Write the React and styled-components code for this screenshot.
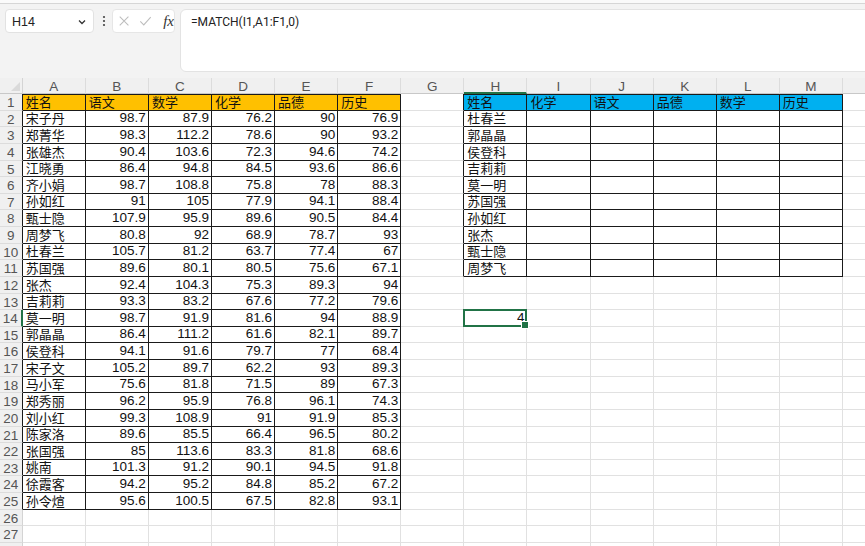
import React from 'react';
import styled, { createGlobalStyle, css } from 'styled-components';

const GlobalStyle = createGlobalStyle`
  html, body {
    margin: 0;
    padding: 0;
    background: #f3f3f3;
    overflow: hidden;
  }
  * { box-sizing: border-box; }
`;

const COL_W = 63.1;
const HEAD_W = 22.7;
const ROW_H = 16.64;
const LETTERS = 'ABCDEFGHIJKLMN'.split('');
const ROW_COUNT = 28;

const rows = [
  ['姓名', '语文', '数学', '化学', '品德', '历史'],
  ['宋子丹', 98.7, 87.9, 76.2, 90, 76.9],
  ['郑菁华', 98.3, 112.2, 78.6, 90, 93.2],
  ['张雄杰', 90.4, 103.6, 72.3, 94.6, 74.2],
  ['江晓勇', 86.4, 94.8, 84.5, 93.6, 86.6],
  ['齐小娟', 98.7, 108.8, 75.8, 78, 88.3],
  ['孙如红', 91, 105, 77.9, 94.1, 88.4],
  ['甄士隐', 107.9, 95.9, 89.6, 90.5, 84.4],
  ['周梦飞', 80.8, 92, 68.9, 78.7, 93],
  ['杜春兰', 105.7, 81.2, 63.7, 77.4, 67],
  ['苏国强', 89.6, 80.1, 80.5, 75.6, 67.1],
  ['张杰', 92.4, 104.3, 75.3, 89.3, 94],
  ['吉莉莉', 93.3, 83.2, 67.6, 77.2, 79.6],
  ['莫一明', 98.7, 91.9, 81.6, 94, 88.9],
  ['郭晶晶', 86.4, 111.2, 61.6, 82.1, 89.7],
  ['侯登科', 94.1, 91.6, 79.7, 77, 68.4],
  ['宋子文', 105.2, 89.7, 62.2, 93, 89.3],
  ['马小军', 75.6, 81.8, 71.5, 89, 67.3],
  ['郑秀丽', 96.2, 95.9, 76.8, 96.1, 74.3],
  ['刘小红', 99.3, 108.9, 91, 91.9, 85.3],
  ['陈家洛', 89.6, 85.5, 66.4, 96.5, 80.2],
  ['张国强', 85, 113.6, 83.3, 81.8, 68.6],
  ['姚南', 101.3, 91.2, 90.1, 94.5, 91.8],
  ['徐霞客', 94.2, 95.2, 84.8, 85.2, 67.2],
  ['孙令煊', 95.6, 100.5, 67.5, 82.8, 93.1],
];

const lookupHead = ['姓名', '化学', '语文', '品德', '数学', '历史'];
const lookupNames = ['杜春兰', '郭晶晶', '侯登科', '吉莉莉', '莫一明', '苏国强', '孙如红', '张杰', '甄士隐', '周梦飞'];

const SEL = { r: 14, c: 7 };

const inTable = (r, c) =>
  (r >= 1 && r <= 25 && c >= 0 && c <= 5) || (r >= 1 && r <= 11 && c >= 7 && c <= 12);

const cellValue = (r, c) => {
  if (c <= 5 && rows[r - 1]) return rows[r - 1][c];
  if (c >= 7 && c <= 12) {
    if (r === 1) return lookupHead[c - 7];
    if (c === 7 && r <= 11) return lookupNames[r - 2];
  }
  if (r === SEL.r && c === SEL.c) return 4;
  return '';
};

const fillOf = (r, c) => {
  if (r === 1 && c <= 5) return '#ffc000';
  if (r === 1 && c >= 7 && c <= 12) return '#00b0f0';
  return '#ffffff';
};

const Page = styled.div`
  width: 865px;
  height: 546px;
  overflow: hidden;
  display: flex;
  flex-direction: column;
`;

const RibbonEdge = styled.div`
  height: 4px;
  background: #fafafa;
  border-bottom: 1px solid #d6d6d6;
  flex-shrink: 0;
`;

const FormulaBar = styled.div`
  display: flex;
  align-items: flex-start;
  padding: 5px 0 0 5px;
  height: 74px;
  flex-shrink: 0;
`;

const NameBox = styled.div`
  width: 89px;
  height: 24px;
  background: #fff;
  border: 1px solid #e2e2e2;
  border-radius: 4px;
  display: flex;
  align-items: center;
  justify-content: space-between;
  padding: 1px 6px 0 6px;
  font-family: 'Liberation Sans', Arial, sans-serif;
  font-size: 12.5px;
  color: #222;
`;

const Dots = styled.div`
  width: 17px;
  height: 24px;
  display: flex;
  align-items: center;
  justify-content: center;
  margin-left: 1px;
`;

const FxBox = styled.div`
  width: 63px;
  height: 24px;
  background: #fff;
  border: 1px solid #e6e6e6;
  border-radius: 4px;
  display: flex;
  align-items: center;
  gap: 9px;
  padding-left: 5px;
`;

const FxLabel = styled.span`
  font-family: 'Liberation Serif', 'Times New Roman', serif;
  font-style: italic;
  font-size: 15px;
  color: #333;
  margin-left: 2px;
`;

const FormulaInput = styled.div`
  flex: 1;
  margin-left: 5px;
  margin-right: -10px;
  height: 63px;
  background: #fff;
  border: 1px solid #e3e3e3;
  border-radius: 6px;
  padding: 5px 0 0 10px;
  font-family: Roboto, 'Liberation Sans', sans-serif;
  font-size: 12px;
  color: #222;
`;

const Grid = styled.div`
  display: grid;
  grid-template-columns: ${HEAD_W}px repeat(${LETTERS.length}, ${COL_W}px);
  grid-template-rows: 16px repeat(${ROW_COUNT}, ${ROW_H}px);
  background: #fff;
`;

const headerBase = css`
  background: #f0f0f0;
  color: #555;
  font-family: 'Liberation Sans', Arial, sans-serif;
  font-size: 13.5px;
  display: flex;
  align-items: center;
  justify-content: center;
  line-height: 1;
`;

const Corner = styled.div`
  ${headerBase};
  position: relative;
  border-right: 1px solid #d4d4d4;
  border-bottom: 1px solid #c8c8c8;
  &::after {
    content: '';
    position: absolute;
    right: 2px;
    bottom: 2px;
    border-style: solid;
    border-width: 0 0 9px 9px;
    border-color: transparent transparent #dadada transparent;
  }
`;

const ColHead = styled.div`
  ${headerBase};
  padding-top: 3px;
  border-right: 1px solid #dcdcdc;
  border-bottom: ${p => (p.$active ? '2px solid #217346' : '1px solid #c8c8c8')};
`;

const RowHead = styled.div`
  ${headerBase};
  border-right: ${p => (p.$active ? '2px solid #217346' : p.$edge ? '1px solid #1a1a1a' : '1px solid #d4d4d4')};
  border-bottom: 1px solid #dcdcdc;
  padding-top: 2px;
`;

const Cell = styled.div`
  position: relative;
  background: ${p => p.$fill};
  border-right: 1px solid ${p => (p.$right ? '#1a1a1a' : '#e1e1e1')};
  border-bottom: 1px solid ${p => (p.$bottom ? '#1a1a1a' : '#e1e1e1')};
  box-shadow: ${p => (p.$top ? 'inset 0 1px 0 #1a1a1a' : 'none')};
  display: flex;
  align-items: flex-end;
  justify-content: ${p => (p.$num ? 'flex-end' : 'flex-start')};
  padding: 0 2px 0 3px;
  white-space: nowrap;
  font-family: ${p => (p.$num
    ? "'Liberation Sans', Arial, sans-serif"
    : "'Noto Sans CJK SC', 'Liberation Sans', sans-serif")};
  font-size: ${p => (p.$num ? '13.5px' : '13px')};
  line-height: 14px;
  color: #111;

  ${p => p.$selected && css`
    &::after {
      content: '';
      position: absolute;
      left: -1px;
      top: -1px;
      right: -1px;
      bottom: -1px;
      border: 2px solid #217346;
      pointer-events: none;
    }
    &::before {
      content: '';
      position: absolute;
      right: -3px;
      bottom: -3px;
      width: 6px;
      height: 6px;
      background: #217346;
      border: 1px solid #fff;
      z-index: 2;
    }
  `}
`;

const CellText = styled.span`
  display: block;
  margin-bottom: 1px;
`;

function Chevron() {
  return (
    <svg width="10" height="10" viewBox="0 0 10 10">
      <path d="M2 3.5 L5 6.5 L8 3.5" fill="none" stroke="#333" strokeWidth="1.3" />
    </svg>
  );
}

function VDots() {
  return (
    <svg width="4" height="12" viewBox="0 0 4 12">
      <circle cx="2" cy="2" r="1.1" fill="#444" />
      <circle cx="2" cy="6" r="1.1" fill="#444" />
      <circle cx="2" cy="10" r="1.1" fill="#444" />
    </svg>
  );
}

function CrossIcon() {
  return (
    <svg width="14" height="14" viewBox="0 0 14 14">
      <path d="M2 2 L12 12 M12 2 L2 12" stroke="#bdbdbd" strokeWidth="1.2" fill="none" />
    </svg>
  );
}

function CheckIcon() {
  return (
    <svg width="15" height="14" viewBox="0 0 15 14">
      <path d="M1.5 7.5 L5.5 11.5 L13.5 2.5" stroke="#bdbdbd" strokeWidth="1.2" fill="none" />
    </svg>
  );
}

export default function App() {
  const cells = [];
  for (let r = 1; r <= ROW_COUNT; r++) {
    cells.push(
      <RowHead key={`rh${r}`} $active={r === SEL.r} $edge={inTable(r, 0)}>
        {r}
      </RowHead>
    );
    LETTERS.forEach((_, c) => {
      const v = cellValue(r, c);
      const num = typeof v === 'number';
      cells.push(
        <Cell
          key={`c${r}-${c}`}
          $fill={fillOf(r, c)}
          $right={inTable(r, c) || inTable(r, c + 1)}
          $bottom={inTable(r, c) || inTable(r + 1, c)}
          $top={r === 1 && inTable(r, c)}
          $num={num}
          $selected={r === SEL.r && c === SEL.c}
        >
          <CellText>{v}</CellText>
        </Cell>
      );
    });
  }

  return (
    <Page>
      <GlobalStyle />
      <RibbonEdge />
      <FormulaBar>
        <NameBox>
          <span>H14</span>
          <Chevron />
        </NameBox>
        <Dots>
          <VDots />
        </Dots>
        <FxBox>
          <CrossIcon />
          <CheckIcon />
          <FxLabel>fx</FxLabel>
        </FxBox>
        <FormulaInput>=MATCH(I1,A1:F1,0)</FormulaInput>
      </FormulaBar>
      <Grid>
        <Corner />
        {LETTERS.map((l, i) => (
          <ColHead key={l} $active={i === SEL.c}>
            {i < 13 ? l : ''}
          </ColHead>
        ))}
        {cells}
      </Grid>
    </Page>
  );
}
